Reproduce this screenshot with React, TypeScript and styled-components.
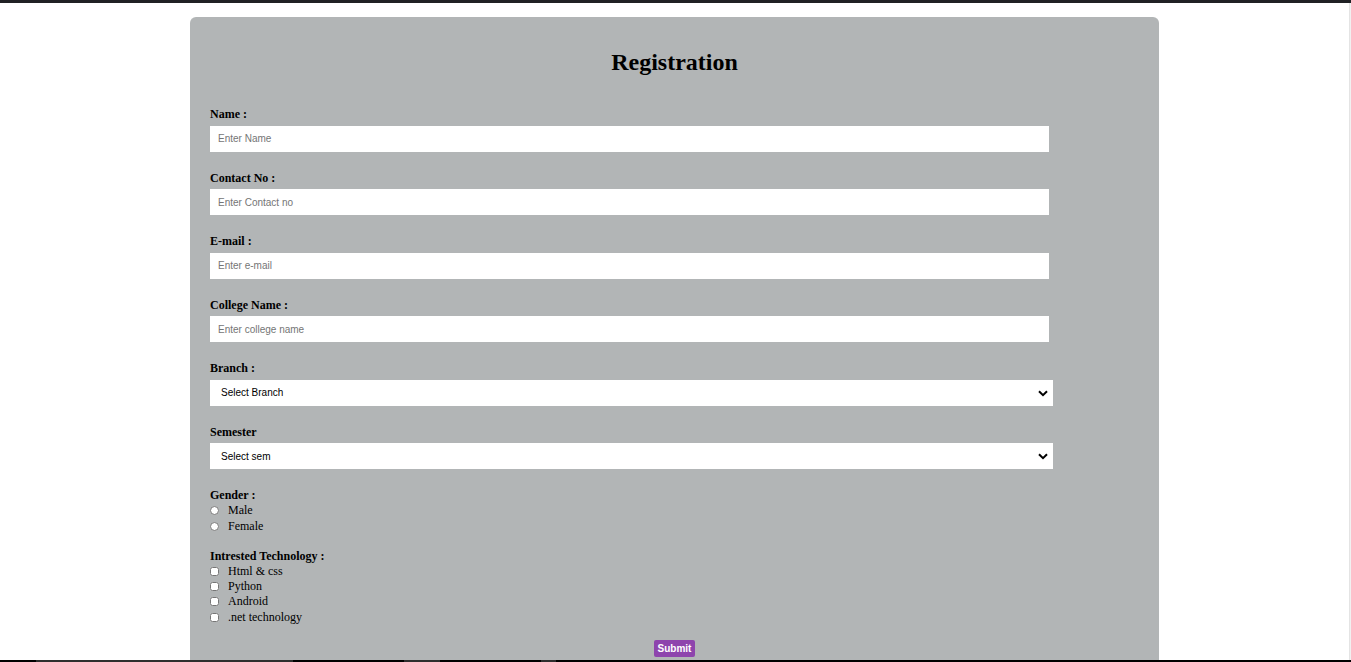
import React from "react";
import styled, { createGlobalStyle } from "styled-components";

const GlobalStyle = createGlobalStyle`
  html, body { margin: 0; padding: 0; background: #ffffff; }
  body { font-family: "Liberation Serif", "Times New Roman", serif; }
  * { box-sizing: border-box; }
`;

const Screen = styled.div`
  width: 100vw;
  height: 100vh;
  display: flex;
  flex-direction: column;
  overflow: hidden;
`;

const TopBar = styled.div`
  height: 3px;
  flex: none;
  background: #202124;
`;

const Middle = styled.div`
  flex: 1;
  display: flex;
  min-height: 0;
`;

const Main = styled.main`
  flex: 1;
  overflow: hidden;
  padding-top: 14px;
`;

const ScrollStrip = styled.div`
  width: 2px;
  flex: none;
  background: #f1f1f1;
  border-left: 1px solid #e4e4e4;
`;

const BottomBar = styled.div`
  height: 2px;
  flex: none;
  display: flex;
  background: #000;
`;

const BarSegment = styled.div<{ $w: number; $shade?: boolean }>`
  width: ${(p) => p.$w}px;
  background: ${(p) => (p.$shade ? "#2e2e2e" : "#000")};
`;

const Card = styled.form`
  width: 969px;
  min-height: 700px;
  margin: 0 auto;
  background: #b2b5b6;
  border-radius: 6px 6px 0 0;
  padding: 31px 20px 0;
`;

const Title = styled.h2`
  margin: 0 0 31px;
  font-size: 24px;
  line-height: 28px;
  font-weight: bold;
  text-align: center;
  color: #000;
`;

const Field = styled.div`
  display: flex;
  flex-direction: column;
  margin-bottom: 19px;
`;

const Label = styled.label`
  font-size: 12px;
  line-height: 14px;
  font-weight: bold;
  color: #000;
  margin-bottom: 4.5px;
`;

const GroupLabel = styled.div`
  font-size: 12px;
  line-height: 14px;
  font-weight: bold;
  color: #000;
  margin-bottom: 1px;
`;

const TextInput = styled.input`
  width: 839px;
  height: 26px;
  border: none;
  outline: none;
  background: #fff;
  padding: 0 8px;
  font-family: "Liberation Sans", Arial, sans-serif;
  font-size: 10px;
  color: #000;
  &::placeholder { color: #757575; }
`;

const SelectWrap = styled.div`
  position: relative;
  width: 843px;
  height: 26px;
`;

const Select = styled.select`
  width: 100%;
  height: 100%;
  border: none;
  outline: none;
  appearance: none;
  -webkit-appearance: none;
  background: #fff;
  border-radius: 0;
  padding: 0 24px 0 11px;
  font-family: "Liberation Sans", Arial, sans-serif;
  font-size: 10px;
  color: #000;
`;

const Chevron = styled.svg`
  position: absolute;
  right: 5px;
  top: 10px;
  width: 10px;
  height: 7px;
  pointer-events: none;
`;

const OptionGroup = styled.div<{ $after: number }>`
  display: flex;
  flex-direction: column;
  margin-bottom: ${(p) => p.$after}px;
`;

const OptionRow = styled.label<{ $h: number }>`
  display: flex;
  align-items: center;
  height: ${(p) => p.$h}px;
  font-size: 12px;
  color: #000;
`;

const Radio = styled.input.attrs({ type: "radio" })`
  width: 9px;
  height: 9px;
  margin: 0 9px 0 0;
  flex: none;
`;

const Checkbox = styled.input.attrs({ type: "checkbox" })`
  width: 9px;
  height: 9px;
  margin: 0 9px 0 0;
  flex: none;
`;

const SubmitRow = styled.div`
  display: flex;
  justify-content: center;
`;

const SubmitButton = styled.button`
  width: 41px;
  height: 17px;
  padding: 0;
  border: none;
  border-radius: 2px;
  background: #8e44ad;
  color: #fff;
  font-family: "Liberation Sans", Arial, sans-serif;
  font-size: 10px;
  font-weight: bold;
  cursor: pointer;
`;

const textFields = [
  { id: "name", label: "Name :", placeholder: "Enter Name" },
  { id: "contact", label: "Contact No :", placeholder: "Enter Contact no" },
  { id: "email", label: "E-mail :", placeholder: "Enter e-mail" },
  { id: "college", label: "College Name :", placeholder: "Enter college name" },
];

const selects = [
  { id: "branch", label: "Branch :", first: "Select Branch", options: ["Computer", "IT", "Mechanical", "Civil", "Electrical"] },
  { id: "sem", label: "Semester", first: "Select sem", options: ["1", "2", "3", "4", "5", "6", "7", "8"] },
];

const techs = ["Html & css", "Python", "Android", ".net technology"];

function ChevronIcon() {
  return (
    <Chevron viewBox="0 0 10 7">
      <path d="M1 1.2 L5 5.2 L9 1.2" fill="none" stroke="#000" strokeWidth="2" />
    </Chevron>
  );
}

export default function App() {
  return (
    <>
      <GlobalStyle />
      <Screen>
        <TopBar />
        <Middle>
          <Main>
            <Card onSubmit={(e) => e.preventDefault()}>
              <Title>Registration</Title>
              {textFields.map((f) => (
                <Field key={f.id}>
                  <Label htmlFor={f.id}>{f.label}</Label>
                  <TextInput id={f.id} placeholder={f.placeholder} />
                </Field>
              ))}
              {selects.map((s) => (
                <Field key={s.id}>
                  <Label htmlFor={s.id}>{s.label}</Label>
                  <SelectWrap>
                    <Select id={s.id} defaultValue="">
                      <option value="">{s.first}</option>
                      {s.options.map((o) => (
                        <option key={o} value={o}>{o}</option>
                      ))}
                    </Select>
                    <ChevronIcon />
                  </SelectWrap>
                </Field>
              ))}
              <OptionGroup $after={14.5}>
                <GroupLabel>Gender :</GroupLabel>
                <OptionRow $h={15.5}>
                  <Radio name="gender" />
                  Male
                </OptionRow>
                <OptionRow $h={15.5}>
                  <Radio name="gender" />
                  Female
                </OptionRow>
              </OptionGroup>
              <OptionGroup $after={15.5}>
                <GroupLabel>Intrested Technology :</GroupLabel>
                {techs.map((t) => (
                  <OptionRow key={t} $h={15.3}>
                    <Checkbox />
                    {t}
                  </OptionRow>
                ))}
              </OptionGroup>
              <SubmitRow>
                <SubmitButton type="submit">Submit</SubmitButton>
              </SubmitRow>
            </Card>
          </Main>
          <ScrollStrip />
        </Middle>
        <BottomBar>
          <BarSegment $w={36} />
          <BarSegment $w={257} $shade />
          <BarSegment $w={111} />
          <BarSegment $w={36} $shade />
          <BarSegment $w={101} />
          <BarSegment $w={15} $shade />
        </BottomBar>
      </Screen>
    </>
  );
}
